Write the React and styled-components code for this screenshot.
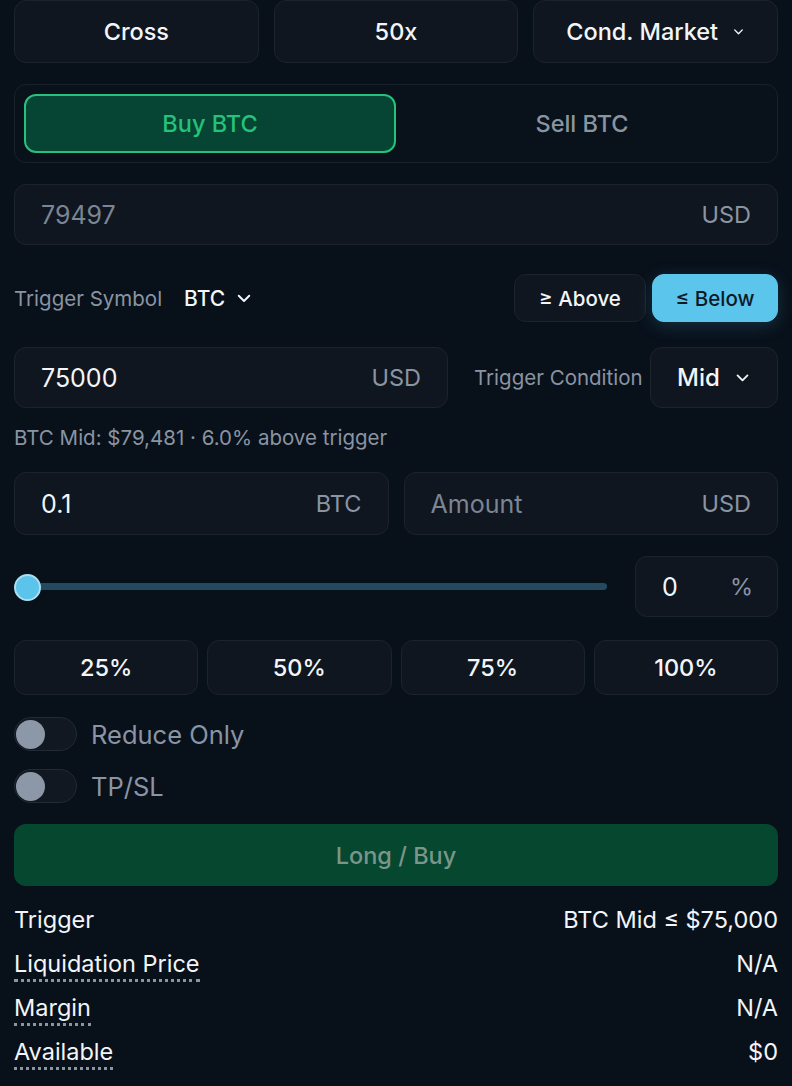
import React from 'react'
import styled, { createGlobalStyle } from 'styled-components'

const GlobalStyle = createGlobalStyle`
  html, body {
    margin: 0;
    padding: 0;
    background: #08101a;
  }
  body {
    font-family: Inter, "Noto Sans", sans-serif;
    color: #f1f4f8;
  }
`

const Panel = styled.div`
  display: flex;
  flex-direction: column;
  padding: 0 14px;
  width: 764px;
  min-height: 1086px;
`

const Row = styled.div`
  display: flex;
  align-items: center;
  gap: ${(p) => p.$gap ?? 15}px;
  margin-top: ${(p) => p.$mt ?? 0}px;
`

const Box = styled.div`
  display: flex;
  align-items: center;
  justify-content: ${(p) => p.$justify || 'center'};
  box-sizing: border-box;
  height: ${(p) => p.$h || 61}px;
  width: ${(p) => (p.$w ? `${p.$w}px` : 'auto')};
  flex: ${(p) => (p.$w ? 'none' : 1)};
  padding: 0 ${(p) => p.$px || 0}px;
  background: #0f161f;
  border: 1.5px solid #1c232d;
  border-radius: 12px;
  font-size: ${(p) => p.$fs || 23.5}px;
  font-weight: 500;
  color: #f3f5f8;
  gap: 14px;
`

const Tabs = styled.div`
  display: flex;
  margin-top: 21px;
  height: 79px;
  box-sizing: border-box;
  padding: 9px;
  background: #09111a;
  border: 1.5px solid #19212a;
  border-radius: 12px;
`

const Tab = styled.div`
  flex: 1;
  display: flex;
  align-items: center;
  justify-content: center;
  border-radius: 12px;
  font-size: 23.5px;
  font-weight: 500;
  box-sizing: border-box;
  color: ${(p) => (p.$active ? '#24c27a' : '#8a95a3')};
  background: ${(p) => (p.$active ? '#064434' : 'transparent')};
  border: 2px solid ${(p) => (p.$active ? '#27c07c' : 'transparent')};
`

const Value = styled.span`
  font-size: 25px;
  font-weight: 400;
  color: ${(p) => (p.$muted ? '#7b8593' : '#f3f5f8')};
`

const Unit = styled.span`
  font-size: 23.5px;
  font-weight: 400;
  color: #8a94a2;
`

const Label = styled.span`
  font-size: 20.5px;
  color: #8a94a2;
  white-space: nowrap;
`

const SymbolPick = styled.span`
  display: flex;
  align-items: center;
  gap: 10px;
  margin-left: 22px;
  font-size: 21px;
  font-weight: 500;
  color: #f3f5f8;
`

const Spacer = styled.div`
  flex: 1;
`

const DirButton = styled.div`
  display: flex;
  align-items: center;
  justify-content: center;
  box-sizing: border-box;
  height: 48px;
  width: ${(p) => p.$w}px;
  border-radius: 12px;
  font-size: 20.5px;
  font-weight: 500;
  background: ${(p) => (p.$active ? '#5bc5ec' : '#0f161f')};
  color: ${(p) => (p.$active ? '#0c1a26' : '#f3f5f8')};
  border: 1.5px solid ${(p) => (p.$active ? '#5bc5ec' : '#1c232d')};
  box-shadow: ${(p) => (p.$active ? '0 4px 18px rgba(91,197,236,0.18)' : 'none')};
`

const ConditionLabel = styled(Label)`
  margin-left: 26px;
`

const Info = styled.div`
  margin-top: 19px;
  font-size: 20.5px;
  color: #8a94a2;
  line-height: 22px;
`

const SliderWrap = styled.div`
  flex: 1;
  position: relative;
  height: 30px;
  display: flex;
  align-items: center;
  margin-right: 14px;
`

const Track = styled.div`
  height: 7px;
  flex: 1;
  margin-left: 14px;
  border-radius: 4px;
  background: #244a5f;
`

const Thumb = styled.div`
  position: absolute;
  left: 0;
  top: 2px;
  width: 27px;
  height: 27px;
  box-sizing: border-box;
  border-radius: 50%;
  background: #5cc3ea;
  border: 2px solid #a9def3;
`

const PctBox = styled(Box)`
  justify-content: space-between;
  padding: 0 24px 0 26px;
`

const Toggle = styled.div`
  width: 63px;
  height: 34px;
  box-sizing: border-box;
  border-radius: 17px;
  background: #111821;
  border: 1.5px solid #222a35;
  display: flex;
  align-items: center;
  padding-left: 1px;
`

const Knob = styled.div`
  width: 29px;
  height: 29px;
  border-radius: 50%;
  background: #8c98a8;
`

const ToggleLabel = styled.span`
  font-size: 25.5px;
  color: #8a94a2;
`

const Submit = styled.div`
  margin-top: 21px;
  height: 62px;
  border-radius: 12px;
  background: #05472f;
  display: flex;
  align-items: center;
  justify-content: center;
  font-size: 23.5px;
  font-weight: 500;
  color: #7b9589;
`

const Stats = styled.div`
  display: flex;
  flex-direction: column;
  margin-top: 20px;
  gap: 14px;
`

const Stat = styled.div`
  display: flex;
  justify-content: space-between;
  align-items: flex-start;
  height: 30px;
  font-size: 23.5px;
  color: #f3f5f8;
`

const StatLabel = styled.span`
  line-height: 28px;
  padding-bottom: 1px;
  border-bottom: ${(p) => (p.$dotted ? '3px dotted #8c96a3' : 'none')};
`

const StatValue = styled.span`
  line-height: 28px;
`

const Chevron = ({ size = 14 }) => (
  <svg width={size} height={size} viewBox="0 0 24 24" fill="none" stroke="currentColor" strokeWidth="2.6" strokeLinecap="round" strokeLinejoin="round">
    <path d="M5 9l7 7 7-7" />
  </svg>
)

const stats = [
  { label: 'Trigger', value: 'BTC Mid ≤ $75,000' },
  { label: 'Liquidation Price', value: 'N/A', dotted: true },
  { label: 'Margin', value: 'N/A', dotted: true },
  { label: 'Available', value: '$0', dotted: true },
]

export default function App() {
  return (
    <>
      <GlobalStyle />
      <Panel>
        <Row $gap={15}>
          <Box $h={63}>Cross</Box>
          <Box $h={63}>50x</Box>
          <Box $h={63}>
            Cond. Market <Chevron size={13} />
          </Box>
        </Row>

        <Tabs>
          <Tab $active>Buy BTC</Tab>
          <Tab>Sell BTC</Tab>
        </Tabs>

        <Row $mt={21}>
          <Box $justify="space-between" $px={26}>
            <Value $muted>79497</Value>
            <Unit>USD</Unit>
          </Box>
        </Row>

        <Row $mt={29} $gap={0}>
          <Label>Trigger Symbol</Label>
          <SymbolPick>
            BTC <Chevron size={18} />
          </SymbolPick>
          <Spacer />
          <DirButton $w={132}>≥ Above</DirButton>
          <DirButton $w={126} $active style={{ marginLeft: 6 }}>
            ≤ Below
          </DirButton>
        </Row>

        <Row $mt={25} $gap={0}>
          <Box $w={434} $justify="space-between" $px={26}>
            <Value>75000</Value>
            <Unit>USD</Unit>
          </Box>
          <ConditionLabel>Trigger Condition</ConditionLabel>
          <Spacer />
          <Box $w={128} $fs={24}>
            Mid <Chevron size={17} />
          </Box>
        </Row>

        <Info>BTC Mid: $79,481 · 6.0% above trigger</Info>

        <Row $mt={23} $gap={15}>
          <Box $justify="space-between" $px={26} $h={63}>
            <Value>0.1</Value>
            <Unit>BTC</Unit>
          </Box>
          <Box $justify="space-between" $px={26} $h={63}>
            <Value $muted>Amount</Value>
            <Unit>USD</Unit>
          </Box>
        </Row>

        <Row $mt={21} $gap={14}>
          <SliderWrap>
            <Track />
            <Thumb />
          </SliderWrap>
          <PctBox $w={143}>
            <Value>0</Value>
            <Unit>%</Unit>
          </PctBox>
        </Row>

        <Row $mt={23} $gap={9}>
          <Box $h={55}>25%</Box>
          <Box $h={55}>50%</Box>
          <Box $h={55}>75%</Box>
          <Box $h={55}>100%</Box>
        </Row>

        <Row $mt={22} $gap={14}>
          <Toggle>
            <Knob />
          </Toggle>
          <ToggleLabel>Reduce Only</ToggleLabel>
        </Row>
        <Row $mt={18} $gap={14}>
          <Toggle>
            <Knob />
          </Toggle>
          <ToggleLabel>TP/SL</ToggleLabel>
        </Row>

        <Submit>Long / Buy</Submit>

        <Stats>
          {stats.map((s) => (
            <Stat key={s.label}>
              <StatLabel $dotted={s.dotted}>{s.label}</StatLabel>
              <StatValue>{s.value}</StatValue>
            </Stat>
          ))}
        </Stats>
      </Panel>
    </>
  )
}
